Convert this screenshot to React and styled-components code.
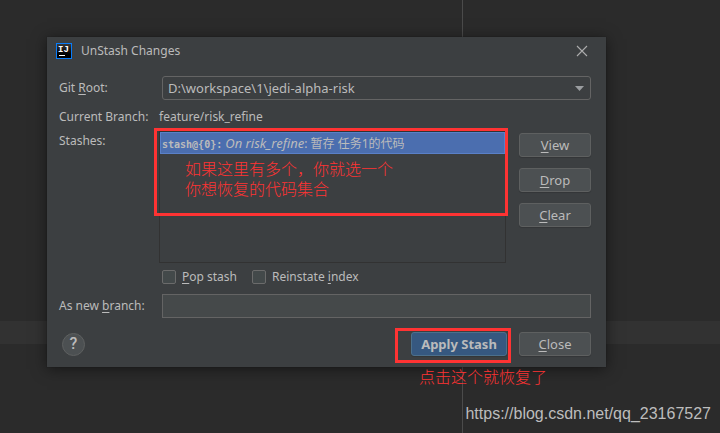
import React, { useState } from 'react'
import styled, { createGlobalStyle } from 'styled-components'

const vars = {
  editorBg: '#2b2b2b',
  caretRow: '#323232',
  guide: '#4b4b4b',
  dialogBg: '#3c3f41',
  fieldBg: '#45494a',
  buttonBg: '#4c5052',
  border: '#646464',
  buttonBorder: '#5e6060',
  text: '#bbbbbb',
  selection: '#4b6eaf',
  note: '#ff3333',
  uiFont: '"Noto Sans", "Noto Sans CJK SC", sans-serif',
  noteFont: '"Liberation Sans", "Noto Sans CJK SC", sans-serif',
}

const stashes = [
  { id: 'stash@{0}', branch: 'On risk_refine', message: '暂存 任务1的代码' },
]

const AppLogo = () => (
  <svg width="16" height="16" viewBox="0 0 16 16" aria-hidden="true">
    <defs>
      <linearGradient id="logo" x1="0" y1="0" x2="0" y2="1">
        <stop offset="0" stopColor="#3a3a3a" />
        <stop offset="0.7" stopColor="#000000" />
      </linearGradient>
    </defs>
    <rect x="0.5" y="0.5" width="15" height="15" fill="url(#logo)" stroke="#087cfa" />
    <text x="2" y="9" fontFamily="Liberation Mono, monospace" fontWeight="700" fontSize="9" fill="#ffffff">IJ</text>
    <rect x="3" y="12" width="6" height="1" fill="#ffffff" />
  </svg>
)

const CloseIcon = () => (
  <svg width="12" height="12" viewBox="0 0 12 12" aria-hidden="true">
    <path d="M1 1L11 11M11 1L1 11" stroke="#adadad" strokeWidth="1.1" fill="none" />
  </svg>
)

const App = () => {
  const [selected, setSelected] = useState(0)
  const [branchName, setBranchName] = useState('')

  return (
    <>
      <GlobalStyle />
      <Page>
        <Dialog role="dialog" aria-labelledby="title">
          <TitleBar>
            <AppLogo />
            <h1 id="title">UnStash Changes</h1>
            <CloseButton type="button" aria-label="Close dialog"><CloseIcon /></CloseButton>
          </TitleBar>

          <Form>
            <Label htmlFor="root">Git <u>R</u>oot:</Label>
            <SelectHolder>
              <select id="root">
                <option>D:\workspace\1\jedi-alpha-risk</option>
              </select>
              <svg width="9" height="5" viewBox="0 0 9 5" aria-hidden="true">
                <path d="M0 0H9L4.5 5Z" fill="#9a9da0" />
              </svg>
            </SelectHolder>

            <RowText>Current Branch:</RowText>
            <RowText>feature/risk_refine</RowText>

            <StashLabel id="stashes">Stashes:</StashLabel>
            <StashArea>
              <StashList role="listbox" aria-labelledby="stashes">
                {stashes.map((stash, index) => (
                  <StashItem
                    key={stash.id}
                    role="option"
                    aria-selected={selected === index}
                    $selected={selected === index}
                    onClick={() => setSelected(index)}
                  >
                    <b>{stash.id}:</b> <em>{stash.branch}</em>: {stash.message}
                  </StashItem>
                ))}
                <ListHighlight role="presentation">
                  <Note>如果这里有多个，你就选一个<br />你想恢复的代码集合</Note>
                </ListHighlight>
              </StashList>
              <SideButtons>
                <Button type="button"><u>V</u>iew</Button>
                <Button type="button"><u>D</u>rop</Button>
                <Button type="button"><u>C</u>lear</Button>
              </SideButtons>
            </StashArea>

            <Options>
              <CheckLabel><input type="checkbox" /><span><u>P</u>op stash</span></CheckLabel>
              <CheckLabel><input type="checkbox" /><span>Reinstate <u>i</u>ndex</span></CheckLabel>
            </Options>

            <Label htmlFor="branch">As new <u>b</u>ranch:</Label>
            <TextInput id="branch" type="text" value={branchName} onChange={(e) => setBranchName(e.target.value)} />
          </Form>

          <Footer>
            <HelpButton type="button" aria-label="Help">?</HelpButton>
            <ApplyHolder>
              <Button type="button" $primary>Apply Stash</Button>
              <ApplyHighlight />
              <ApplyNote>点击这个就恢复了</ApplyNote>
            </ApplyHolder>
            <Button type="button"><u>C</u>lose</Button>
          </Footer>
        </Dialog>
        <Watermark>https://blog.csdn.net/qq_23167527</Watermark>
      </Page>
    </>
  )
}

const GlobalStyle = createGlobalStyle`
* {
  box-sizing: border-box;
}

body {
  margin: 0;
  background: ${vars.editorBg};
  color: ${vars.text};
  font-family: ${vars.uiFont};
  font-size: 12px;
  line-height: 20px;
}

button, input, select {
  font: inherit;
  color: inherit;
}

u {
  text-underline-offset: 2px;
  text-decoration-thickness: 1px;
  text-decoration-skip-ink: none;
}
`

/* editor behind the dialog: margin guide and caret row */
const Page = styled.div`
min-height: 100vh;
display: flex;
flex-direction: column;
padding: 37px 9px 9px 47px;
background:
  linear-gradient(${vars.guide}, ${vars.guide}) 462px 0 / 1px 100% no-repeat,
  linear-gradient(${vars.caretRow}, ${vars.caretRow}) 0 321px / 100% 23px no-repeat,
  ${vars.editorBg};
`

const Dialog = styled.section`
margin-right: 105px;
padding: 0 15px 11px 12px;
background: ${vars.dialogBg};
box-shadow: 0 2px 14px rgba(0, 0, 0, 0.5), 0 0 1px #1e1e1e;
`

const TitleBar = styled.header`
display: flex;
align-items: center;
height: 28px;
margin: 0 0 11px -3px;

h1 {
  flex: 1;
  margin: 0 0 0 9px;
  font-size: 12px;
  font-weight: 400;
}
`

const CloseButton = styled.button`
display: flex;
padding: 3px;
border: 0;
background: none;
`

const Form = styled.div`
display: grid;
grid-template-columns: 100px 1fr;
align-items: center;
`

const Label = styled.label`
white-space: nowrap;
`

const SelectHolder = styled.div`
position: relative;
margin-left: 3px;

select {
  display: block;
  appearance: none;
  width: 100%;
  height: 24px;
  padding: 0 24px 0 5px;
  border: 1px solid ${vars.border};
  border-radius: 3px;
  background: ${vars.dialogBg};
  font-size: 13px;
}

svg {
  position: absolute;
  right: 7px;
  top: 10px;
}
`

const RowText = styled.span`
padding: 7px 0 4px;
white-space: nowrap;
`

const StashLabel = styled.span`
align-self: start;
`

const StashArea = styled.div`
display: flex;
gap: 13px;
`

const StashList = styled.ul`
position: relative;
flex: 1;
height: 132px;
margin: 0;
padding: 0;
border: 1px solid #323232;
list-style: none;
`

const StashItem = styled.li`
height: 22px;
padding-left: 1px;
border: 1px solid #5a80c8;
background: ${({ $selected }) => ($selected ? vars.selection : 'transparent')};
white-space: pre;

b {
  font-family: "DejaVu Sans Mono", monospace;
  font-size: 10px;
}

em {
  font-size: 13px;
}
`

const SideButtons = styled.div`
display: flex;
flex-direction: column;
gap: 11px;
padding-top: 2px;
`

const Button = styled.button`
display: block;
width: ${({ $primary }) => ($primary ? '96px' : '72px')};
height: 24px;
padding: 0;
border: 1px solid ${({ $primary }) => ($primary ? '#4c708c' : vars.buttonBorder)};
border-radius: 3px;
background: ${({ $primary }) => ($primary ? '#365880' : vars.buttonBg)};
box-shadow: 0 1px 1px rgba(0, 0, 0, 0.15);
font-size: 13px;
font-weight: ${({ $primary }) => ($primary ? 700 : 400)};
`

const Highlight = styled.div`
position: absolute;
border: 3px solid ${vars.note};
pointer-events: none;
`

const ListHighlight = styled(Highlight)`
top: -4px;
left: -6px;
right: -3px;
height: 88px;
padding: 29px 0 0 28px;
`

const ApplyHighlight = styled(Highlight)`
inset: -4px -4px -7px -16px;
`

const Note = styled.p`
margin: 0;
color: ${vars.note};
font-family: ${vars.noteFont};
font-size: 16px;
font-weight: 300;
line-height: 20px;
white-space: nowrap;
`

const Options = styled.div`
grid-column: 2;
display: flex;
gap: 15px;
height: 28px;
margin-bottom: 3px;
padding-left: 3px;
`

const CheckLabel = styled.label`
display: flex;
align-items: center;
gap: 6px;
white-space: nowrap;

input {
  appearance: none;
  width: 14px;
  height: 14px;
  margin: 0;
  border: 1px solid #6b6b6b;
  border-radius: 2px;
  background: #43494a;
}

input:checked {
  background: ${vars.selection};
}
`

const TextInput = styled.input`
min-width: 0;
height: 24px;
margin-left: 3px;
padding: 0 6px;
border: 1px solid ${vars.border};
background: ${vars.fieldBg};
`

const Footer = styled.footer`
display: flex;
align-items: center;
gap: 12px;
margin-top: 14px;
`

const HelpButton = styled.button`
width: 23px;
height: 23px;
margin: 0 auto 0 3px;
padding: 0;
border: 1px solid ${vars.buttonBorder};
border-radius: 50%;
background: ${vars.buttonBg};
font-family: Roboto, sans-serif;
font-size: 16px;
font-weight: 500;
`

const ApplyHolder = styled.div`
position: relative;
`

const ApplyNote = styled(Note)`
position: absolute;
top: 36px;
left: 8px;
`

const Watermark = styled.p`
margin: auto 0 0;
align-self: flex-end;
color: #bdbdbd;
font-family: "Liberation Sans", Arial, sans-serif;
font-size: 16px;
`

export default App
